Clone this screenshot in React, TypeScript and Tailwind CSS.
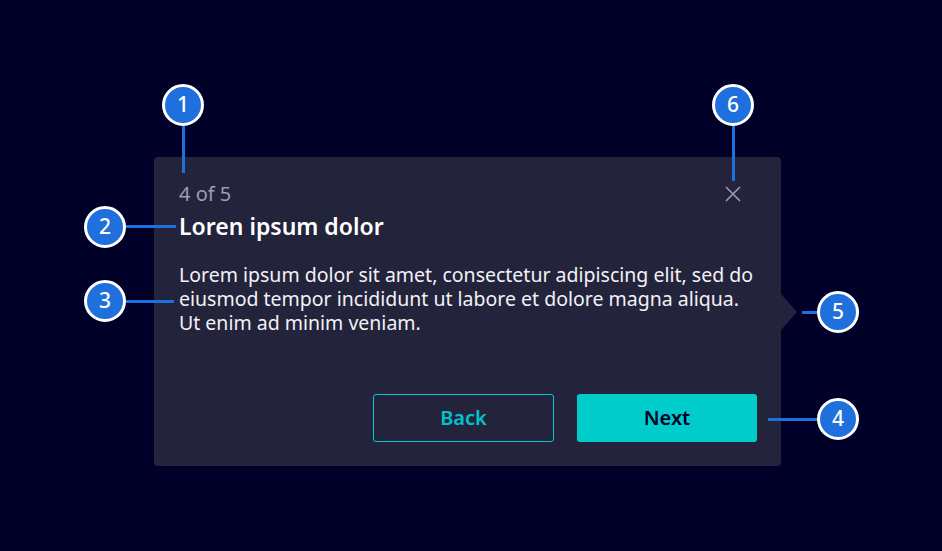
import React from "react";

function Badge({ n, x, y }: { n: number; x: number; y: number }) {
  return (
    <div
      className="absolute flex h-[42px] w-[42px] items-center justify-center rounded-full border-[3px] border-white bg-[#1f6fdc] text-[21px] font-medium text-white"
      style={{ left: x - 21, top: y - 21 }}
    >
      {n}
    </div>
  );
}

// connector from a badge to the part it points at
function Line({ x, y, w, h }: { x: number; y: number; w: number; h: number }) {
  return <div className="absolute bg-[#1f6fdc]" style={{ left: x, top: y, width: w, height: h }} />;
}

export default function App() {
  return (
    <div
      className="relative h-[551px] w-[942px] overflow-hidden bg-[#000028]"
      style={{ fontFamily: '"Noto Sans", "Open Sans", sans-serif' }}
    >
      <div className="pl-[154px] pt-[157px]">
        <div className="relative flex h-[309px] w-[627px] flex-col rounded-[4px] bg-[#23233c] pl-[25px] pr-[24px] pt-[25px] pb-[24px]">
          <div className="flex items-start justify-between">
            <span className="text-[20px] leading-[24px] text-[#9d9db0]">4 of 5</span>
            <svg width="16" height="16" viewBox="0 0 16 16" className="mr-[16px] mt-[4px]">
              <path d="M1 1 L15 15 M15 1 L1 15" stroke="#a0a0b2" strokeWidth="1.5" />
            </svg>
          </div>
          <h2 className="mt-[6px] text-[23px] font-semibold leading-[28px] text-white">Loren ipsum dolor</h2>
          <p className="mt-[23px] w-[580px] text-[19.5px] leading-[24px] text-[#f2f2f5]">
            Lorem ipsum dolor sit amet, consectetur adipiscing elit, sed do eiusmod tempor incididunt ut labore et dolore magna aliqua. Ut enim ad minim veniam.
          </p>
          <div className="mt-auto flex justify-end gap-[23px]">
            <button className="h-[48px] w-[181px] rounded-[3px] border border-[#00cccc] text-[20px] font-semibold text-[#00c4cc]">
              Back
            </button>
            <button className="h-[48px] w-[180px] rounded-[3px] bg-[#00cccc] text-[20px] font-semibold text-[#000028]">
              Next
            </button>
          </div>
          <div className="absolute right-[-16px] top-[137px] h-0 w-0 border-y-[18px] border-l-[16px] border-y-transparent border-l-[#23233c]" />
        </div>
      </div>

      <Line x={182} y={125} w={3} h={48} />
      <Line x={732} y={125} w={3} h={56} />
      <Line x={125} y={225} w={51} h={3} />
      <Line x={125} y={300} w={49} h={3} />
      <Line x={802} y={311} w={15} h={3} />
      <Line x={768} y={418} w={49} h={3} />

      <Badge n={1} x={183} y={105} />
      <Badge n={6} x={733} y={105} />
      <Badge n={2} x={105} y={227} />
      <Badge n={3} x={105} y={301} />
      <Badge n={5} x={838} y={312} />
      <Badge n={4} x={838} y={419} />
    </div>
  );
}
